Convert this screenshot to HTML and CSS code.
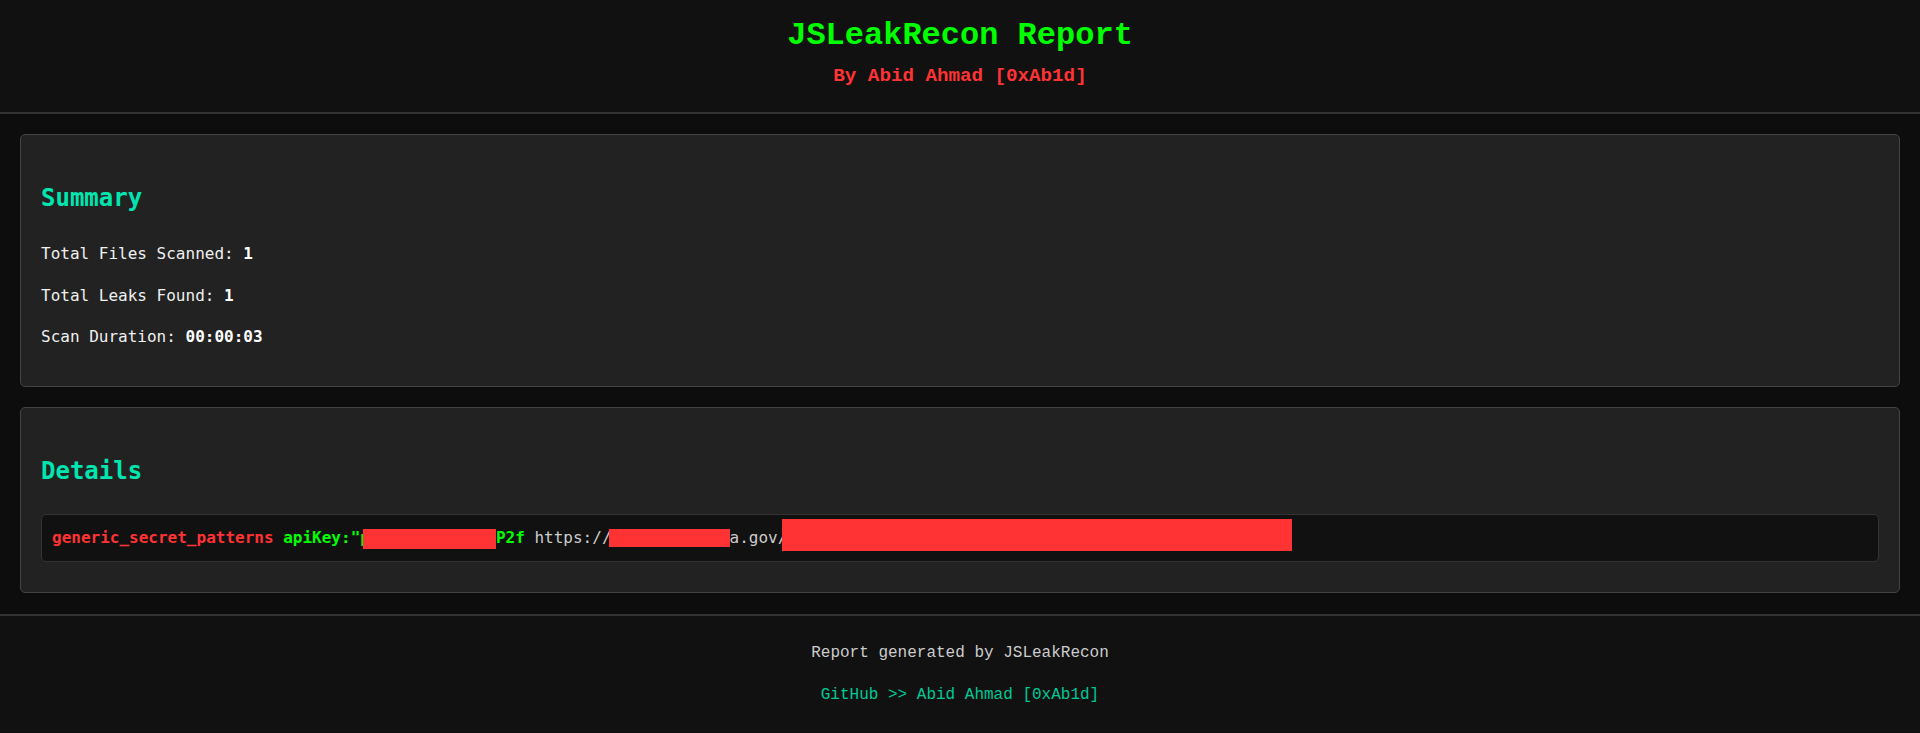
FILE: index.html
```html
<!DOCTYPE html>
<html lang="en">
<head>
<meta charset="utf-8">
<title>JSLeakRecon Report</title>
<link rel="stylesheet" href="styles.css">
</head>
<body>
<header class="site-header">
  <h1 class="title">JSLeakRecon Report</h1>
  <p class="byline">By Abid Ahmad [0xAb1d]</p>
</header>
<main class="content">
  <section class="card">
    <h2 class="card-title">Summary</h2>
    <p class="stat">Total Files Scanned: <strong>1</strong></p>
    <p class="stat">Total Leaks Found: <strong>1</strong></p>
    <p class="stat">Scan Duration: <strong>00:00:03</strong></p>
  </section>
  <section class="card">
    <h2 class="card-title">Details</h2>
    <div class="leak"><span class="leak-type">generic_secret_patterns</span> <span class="leak-match">apiKey:"p<span class="redact redact-key"></span>P2f</span> <span class="leak-url">https://<span class="redact redact-host"></span>a.gov/<span class="redact redact-path"></span></span></div>
  </section>
</main>
<footer class="site-footer">
  <p class="footer-note">Report generated by JSLeakRecon</p>
  <p class="footer-link"><a href="#">GitHub &gt;&gt; Abid Ahmad [0xAb1d]</a></p>
</footer>
</body>
</html>
```
FILE: styles.css
```css
html, body {
  margin: 0;
  padding: 0;
}
body {
  background: #0d0d0d;
  color: #e8e8e8;
  font-family: "DejaVu Sans Mono", "Liberation Mono", monospace;
  font-size: 16px;
  line-height: 1.6;
}
.site-header {
  background: #111111;
  text-align: center;
  padding: 18px 0 25px;
  border-bottom: 2px solid #333333;
  font-family: "Liberation Mono", "Courier New", monospace;
}
.title {
  margin: 0;
  font-size: 32px;
  line-height: 1.15;
  font-weight: bold;
  color: #00ff00;
}
.byline {
  margin: 10px 0 0;
  font-size: 19.2px;
  line-height: 1.15;
  font-weight: bold;
  color: #ff3333;
}
.content {
  display: flex;
  flex-direction: column;
  gap: 20px;
  padding: 20px 20px 21px;
}
.card {
  background: #222222;
  border: 1px solid #444444;
  border-radius: 5px;
  padding: 20px;
}
.card-title {
  margin: 24px 0;
  font-size: 24px;
  font-weight: bold;
  color: #00e6b0;
}
.stat {
  margin: 16px 0;
  color: #f0f0f0;
}
.stat strong {
  color: #ffffff;
}
.leak {
  background: #111111;
  border: 1px solid #333333;
  border-radius: 5px;
  padding: 10px;
  margin: 10px 0;
  color: #cccccc;
  white-space: nowrap;
}
.leak-type {
  color: #ff3333;
  font-weight: bold;
}
.leak-match {
  color: #00ff00;
  font-weight: bold;
}
.leak-url {
  color: #cccccc;
}
.redact {
  display: inline-block;
  background: #ff3333;
  vertical-align: baseline;
}
.redact-key {
  width: 133px;
  height: 20px;
  margin: 0 0 -6px -7px;
}
.redact-host {
  width: 121px;
  height: 18px;
  margin: 0 0 -4px -3px;
}
.redact-path {
  width: 510px;
  height: 32px;
  margin: -8px 0 -8px -5px;
}
.site-footer {
  background: #111111;
  border-top: 2px solid #333333;
  text-align: center;
  padding: 9px 0 8px;
  font-family: "Liberation Mono", "Courier New", monospace;
}
.footer-note {
  margin: 16px 0;
  color: #cccccc;
}
.footer-link {
  margin: 16px 0;
}
.footer-link a {
  color: #00c896;
  text-decoration: none;
}
```
